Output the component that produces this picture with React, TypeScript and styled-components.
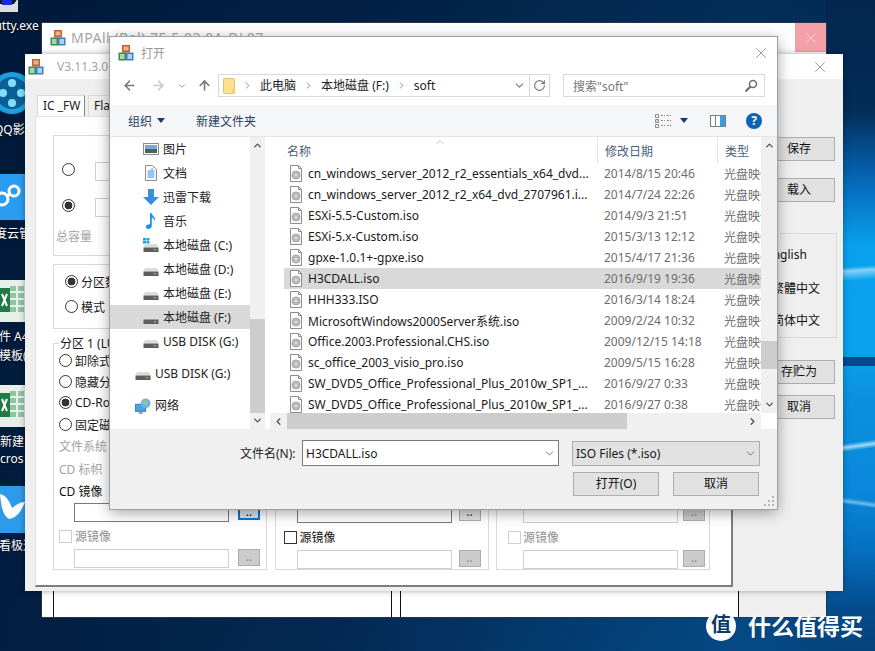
import React from "react";
import styled, { createGlobalStyle } from "styled-components";
import { ArrowLeft, ArrowRight, ArrowUp, ChevronDown, ChevronRight, ChevronUp, ChevronLeft, RotateCw, X } from "lucide-react";

const GlobalStyle = createGlobalStyle`
  html, body {
    margin: 0;
    padding: 0;
    overflow: hidden;
  }
  * {
    box-sizing: border-box;
  }
`;

const Desktop = styled.div`
  position: relative;
  width: 875px;
  height: 651px;
  overflow: hidden;
  font-family: "Noto Sans", "Noto Sans CJK SC", sans-serif;
  font-size: 12px;
  color: #1a1a1a;
  background:
    linear-gradient(180deg, rgba(1, 22, 52, 0.55) 0, rgba(1, 22, 52, 0) 100%),
    linear-gradient(90deg, #021d40 0%, #032a55 40%, #044a86 85%, #04437c 100%);
`;

const WallpaperStrip = styled.div`
  position: absolute;
  left: 826px;
  top: 0;
  width: 49px;
  height: 651px;
  background:
    linear-gradient(176deg, transparent 268px, rgba(170, 225, 250, 0.75) 272px, transparent 282px),
    linear-gradient(0deg, transparent 285px, #04498c 285px, #04498c 294px, transparent 294px),
    linear-gradient(172deg, transparent 442px, rgba(200, 235, 250, 0.8) 446px, transparent 450px),
    linear-gradient(8deg, transparent 148px, rgba(170, 225, 250, 0.6) 151px, transparent 155px),
    linear-gradient(180deg, #02264e 0, #032c58 110px, #0668b8 180px, #09a0ee 245px, #0aa2ec 350px, #0a90df 400px, #0a88db 490px, #0670c0 550px, #044b8c 610px, #04437c 651px);
`;

const DesktopLabel = styled.div<{ $x: number; $y: number }>`
  position: absolute;
  left: ${(p) => p.$x}px;
  top: ${(p) => p.$y}px;
  color: #fff;
  line-height: 16px;
  white-space: nowrap;
  text-shadow: 0 1px 2px rgba(0, 0, 0, 0.8);
`;

const DesktopIcon = styled.svg<{ $y: number }>`
  position: absolute;
  left: 0;
  top: ${(p) => p.$y}px;
  width: 26px;
  height: 48px;
`;

/* windows on the desktop */
const BackWindow = styled.div`
  position: absolute;
  left: 42px;
  top: 23px;
  width: 784px;
  height: 594px;
  background: #fff;
  display: flex;
  flex-direction: column;
  box-shadow: 0 0 0 1px #27344a;
`;

const BackTitle = styled.div`
  height: 31px;
  flex: none;
  display: flex;
  align-items: flex-start;
  gap: 5px;
  padding: 6px 0 0 8px;
  color: #a6a6a6;
  font-size: 14px;
`;

const BackTitleText = styled.span`
  line-height: 18px;
  letter-spacing: 0.5px;
`;

const BackClose = styled.div`
  margin: -6px 0 0 auto;
  width: 31px;
  height: 29px;
  background: #f4a0a8;
  color: #fde3e5;
  display: flex;
  align-items: center;
  justify-content: center;
`;

const BackBody = styled.div`
  flex: 1;
  display: flex;
  padding-left: 11px;
`;

const BackPanel = styled.div`
  width: 339px;
  border-left: 1px solid #111;
  border-right: 1px solid #111;
  margin-right: 8px;
  &:nth-child(2) {
    margin-right: 0;
  }
`;

const BackFill = styled.div`
  flex: 1;
  background: #efefef;
`;

const MidWindow = styled.div`
  position: absolute;
  left: 25px;
  top: 54px;
  width: 818px;
  height: 537px;
  background: #efefef;
  display: flex;
  flex-direction: column;
  box-shadow: 0 0 6px rgba(0, 0, 0, 0.35);
`;

const MidTitle = styled.div`
  height: 25px;
  flex: none;
  background: #fff;
  display: flex;
  align-items: center;
  gap: 13px;
  padding-left: 3px;
  color: #a6a6a6;
  font-size: 12px;
`;

const MidClose = styled.div`
  margin-left: auto;
  margin-right: 14px;
  color: #7a7a7a;
  display: flex;
`;

const MidBody = styled.div`
  flex: 1;
  display: flex;
`;

const TabColumn = styled.div`
  width: 708px;
  padding: 16px 0 0 10px;
`;

const TabRow = styled.div`
  display: flex;
  height: 21px;
  padding-left: 2px;
  gap: 3px;
`;

const Tab = styled.div<{ $active?: boolean }>`
  width: ${(p) => (p.$active ? 48 : 60)}px;
  background: ${(p) => (p.$active ? "#fff" : "#f0f0f0")};
  border: 1px solid #d9d9d9;
  border-bottom: none;
  border-right-color: ${(p) => (p.$active ? "#8a8a8a" : "#d9d9d9")};
  line-height: 20px;
  padding-left: 5px;
  white-space: nowrap;
  overflow: hidden;
`;

const TabPage = styled.div`
  width: 698px;
  height: 471px;
  background: #fff;
  border-top: 1px solid #e3e3e3;
  border-left: 1px solid #e3e3e3;
  border-right: 2px solid #7d7d7d;
  border-bottom: 2px solid #7d7d7d;
  padding: 18px 0 0 17px;
`;

const Box = styled.div<{ $h: number }>`
  width: 664px;
  height: ${(p) => p.$h}px;
  border: 1px solid #d9d9d9;
  margin-bottom: 8px;
`;

const DriveBox = styled(Box)`
  padding: 27px 0 0 8px;
  color: #a3a3a3;
`;

const SizeRow = styled.div`
  display: flex;
  align-items: flex-start;
  gap: 20px;
  height: 36px;
`;

const SizeField = styled.div`
  width: 80px;
  height: 19px;
  margin-top: -1px;
  border: 1px solid #cfcfcf;
`;

const CapacityLabel = styled.div`
  margin: -8px 0 0 -6px;
`;

const PartBox = styled(Box)`
  padding: 4px 0 0 11px;
`;

const RadioRow = styled.div<{ $h: number; $muted?: boolean }>`
  display: flex;
  align-items: center;
  gap: 3px;
  height: ${(p) => p.$h}px;
  color: ${(p) => (p.$muted ? "#a3a3a3" : "#1a1a1a")};
`;

const Radio = styled.span<{ $checked?: boolean }>`
  width: 13px;
  height: 13px;
  flex: none;
  border-radius: 50%;
  border: 1px solid #333;
  background: ${(p) => (p.$checked ? "radial-gradient(circle, #333 0, #333 3.6px, #fff 4.2px)" : "#fff")};
`;

const LunRow = styled.div`
  display: flex;
  gap: 7.5px;
  margin-top: 4px;
`;

const LunGroup = styled.fieldset`
  width: 214px;
  height: 233px;
  margin: 0;
  padding: 0 0 0 5px;
  border: 1px solid #d9d9d9;
  position: relative;
`;

const LunLegend = styled.legend`
  margin-left: 0;
  padding: 0 1px;
  line-height: 13px;
`;

const LunSpacer = styled.div`
  height: 166px;
`;

const FieldLabel = styled.div<{ $muted?: boolean; $h: number; $lh: number }>`
  height: ${(p) => p.$h}px;
  line-height: ${(p) => p.$lh}px;
  color: ${(p) => (p.$muted ? "#a3a3a3" : "#111")};
`;

const FieldRow = styled.div<{ $inset: number; $gap: number }>`
  display: flex;
  gap: ${(p) => p.$gap}px;
  padding-left: ${(p) => p.$inset}px;
`;

const PathInput = styled.div<{ $dim?: boolean }>`
  width: 155px;
  height: 19px;
  border: 1px solid ${(p) => (p.$dim ? "#cfcfcf" : "#7a7a7a")};
  background: #fff;
`;

const BrowseButton = styled.div<{ $state: "focus" | "normal" | "dim" }>`
  width: 22px;
  height: 17px;
  text-align: center;
  line-height: 14px;
  font-size: 12px;
  background: ${(p) => (p.$state === "dim" ? "#cccccc" : "#e1e1e1")};
  color: ${(p) => (p.$state === "dim" ? "#8a8a8a" : "#222")};
  border: ${(p) => (p.$state === "focus" ? "2px solid #0078d7" : "1px solid #adadad")};
`;

const CheckRow = styled.div<{ $muted?: boolean; $inset: number; $gap: number }>`
  display: flex;
  align-items: center;
  gap: ${(p) => p.$gap}px;
  height: 18px;
  margin: 5px 0 4px 0;
  padding-left: ${(p) => p.$inset}px;
  color: ${(p) => (p.$muted ? "#8f8f8f" : "#111")};
`;

const CheckBox = styled.span<{ $muted?: boolean }>`
  width: 13px;
  height: 13px;
  border: 1px solid ${(p) => (p.$muted ? "#cfcfcf" : "#333")};
  background: #fff;
  flex: none;
`;

const SideColumn = styled.div`
  flex: 1;
  padding: 58px 0 0 30px;
  display: flex;
  flex-direction: column;
`;

const SideButton = styled.div<{ $gap: number }>`
  width: 72px;
  height: 24px;
  flex: none;
  margin-bottom: ${(p) => p.$gap}px;
  background: #e1e1e1;
  border: 1px solid #adadad;
  text-align: center;
  line-height: 22px;
  color: #111;
`;

const LangBox = styled.div`
  width: 74px;
  height: 105px;
  flex: none;
  margin-top: -1px;
  margin-bottom: 22px;
  border: 1px solid #d9d9d9;
  display: flex;
  flex-direction: column;
  padding: 12px 0 0 8px;
`;

const LangItem = styled.div<{ $h: number; $shift?: number }>`
  height: ${(p) => p.$h}px;
  margin-left: ${(p) => p.$shift ?? 0}px;
  white-space: nowrap;
  line-height: 18px;
  color: #111;
  font-size: 12px;
`;

/* the open-file dialog */
const Dialog = styled.div`
  position: absolute;
  left: 110px;
  top: 37px;
  width: 667px;
  height: 472px;
  background: #fff;
  display: flex;
  flex-direction: column;
  box-shadow: 0 0 0 1px #a0a0a0, 0 3px 14px rgba(0, 0, 0, 0.4);
`;

const DlgTitle = styled.div`
  height: 31px;
  flex: none;
  display: flex;
  align-items: center;
  gap: 7px;
  padding-left: 8px;
  color: #999;
`;

const DlgClose = styled.div`
  margin-left: auto;
  margin-right: 7px;
  color: #7a7a7a;
  display: flex;
`;

const NavBar = styled.div`
  height: 37px;
  flex: none;
  display: flex;
  align-items: flex-start;
  padding-top: 6px;
`;

const NavButtons = styled.div`
  width: 108px;
  height: 23px;
  flex: none;
  display: flex;
  align-items: center;
  padding-left: 4px;
`;

const NavIcon = styled.span<{ $w: number; $color: string }>`
  width: ${(p) => p.$w}px;
  flex: none;
  display: flex;
  justify-content: center;
  color: ${(p) => p.$color};
`;

const AddressBox = styled.div`
  width: 332px;
  height: 23px;
  flex: none;
  border: 1px solid #d9d9d9;
  display: flex;
  align-items: center;
  padding-left: 4px;
`;

const Crumb = styled.span`
  white-space: nowrap;
  color: #222;
  line-height: 20px;
`;

const CrumbSep = styled.span<{ $w: number }>`
  width: ${(p) => p.$w}px;
  display: flex;
  justify-content: center;
  color: #8a8a8a;
  flex: none;
`;

const AddressEnd = styled.div`
  margin-left: auto;
  display: flex;
  align-items: center;
  height: 100%;
  color: #777;
`;

const AddressDrop = styled.span`
  width: 20px;
  display: flex;
  justify-content: center;
`;

const AddressRefresh = styled.span`
  width: 20px;
  height: 100%;
  border-left: 1px solid #d9d9d9;
  display: flex;
  align-items: center;
  justify-content: center;
`;

const SearchBox = styled.div`
  width: 202px;
  height: 23px;
  margin-left: 13px;
  flex: none;
  border: 1px solid #d9d9d9;
  display: flex;
  align-items: center;
  justify-content: space-between;
  padding: 0 6px 0 9px;
  color: #777;
`;

const ToolBar = styled.div`
  height: 32px;
  flex: none;
  background: #f5f6f7;
  border-bottom: 1px solid #e3e5e8;
  display: flex;
  align-items: center;
  padding-left: 18px;
  color: #2a3f5f;
`;

const ToolText = styled.span<{ $w: number; $left?: number }>`
  width: ${(p) => p.$w}px;
  margin-left: ${(p) => p.$left ?? 0}px;
  flex: none;
  white-space: nowrap;
`;

const ToolCaret = styled.span<{ $left?: number; $right?: number }>`
  width: 0;
  height: 0;
  margin-left: ${(p) => p.$left ?? 5}px;
  margin-right: ${(p) => p.$right ?? 0}px;
  border-left: 4px solid transparent;
  border-right: 4px solid transparent;
  border-top: 5px solid #1d3a63;
`;

const ToolRight = styled.div`
  margin-left: auto;
  display: flex;
  align-items: center;
  padding-right: 15px;
`;

const HelpBadge = styled.span`
  width: 16px;
  height: 16px;
  margin-left: 20px;
  border-radius: 50%;
  background: #0d62b8;
  color: #fff;
  font-weight: 700;
  font-size: 12px;
  line-height: 16px;
  text-align: center;
`;

const MainArea = styled.div`
  height: 292px;
  flex: none;
  display: flex;
`;

const Sidebar = styled.div`
  width: 140px;
  flex: none;
  overflow: hidden;
`;

const NavItem = styled.div<{ $selected?: boolean; $top?: boolean; $gap?: number }>`
  height: 24px;
  display: flex;
  align-items: center;
  gap: 4px;
  padding-left: ${(p) => (p.$top ? 25 : 33)}px;
  margin-top: ${(p) => p.$gap ?? 0}px;
  background: ${(p) => (p.$selected ? "#d9d9d9" : "transparent")};
  white-space: nowrap;
  color: #222;
`;

const NavIconBox = styled.span`
  width: 16px;
  height: 16px;
  flex: none;
  display: flex;
`;

const VScroll = styled.div<{ $w: number }>`
  width: ${(p) => p.$w}px;
  flex: none;
  background: #f0f0f0;
  position: relative;
  color: #555;
  display: flex;
  flex-direction: column;
  align-items: center;
  justify-content: space-between;
  padding: 3px 0;
`;

const ScrollThumb = styled.div<{ $top: number; $h: number }>`
  position: absolute;
  left: 0;
  right: 0;
  top: ${(p) => p.$top}px;
  height: ${(p) => p.$h}px;
  background: #cdcdcd;
`;

const ListPane = styled.div`
  flex: 1;
  margin-left: 5px;
  display: grid;
  grid-template-columns: 491px 16px;
  grid-template-rows: 276px 16px;
`;

const ListArea = styled.div`
  padding-left: 14px;
  position: relative;
  overflow: hidden;
`;

const SortCaret = styled.span`
  position: absolute;
  left: 164px;
  top: -1px;
  color: #8a8a8a;
  display: flex;
`;

const HeaderRow = styled.div`
  display: grid;
  grid-template-columns: 313px 120px 44px;
  height: 26px;
  color: #4c607a;
`;

const HeaderCell = styled.div`
  padding: 5px 0 0 3px;
  &:not(:first-child) {
    border-left: 1px solid #e5e5e5;
    padding-left: 7px;
  }
`;

const FileRow = styled.div<{ $selected?: boolean }>`
  display: grid;
  grid-template-columns: 313px 120px 44px;
  align-items: center;
  height: 21px;
  background: ${(p) => (p.$selected ? "#d9d9d9" : "transparent")};
`;

const NameCell = styled.div`
  display: flex;
  align-items: center;
  gap: 6px;
  padding-left: 6px;
  white-space: nowrap;
  overflow: hidden;
  color: #1a1a1a;
`;

const DateCell = styled.div`
  padding-left: 7px;
  color: #6d6d6d;
  white-space: nowrap;
`;

const TypeCell = styled.div`
  padding-left: 7px;
  color: #6d6d6d;
  white-space: nowrap;
  overflow: hidden;
`;

const HScroll = styled.div`
  background: #f0f0f0;
  display: flex;
  align-items: center;
  color: #555;
`;

const HThumb = styled.div`
  width: 340px;
  height: 100%;
  background: #cdcdcd;
`;

const HArrow = styled.span<{ $w: number; $end?: boolean }>`
  width: ${(p) => p.$w}px;
  flex: none;
  display: flex;
  justify-content: ${(p) => (p.$end ? "flex-end" : "center")};
  padding-right: ${(p) => (p.$end ? 3 : 0)}px;
`;

const ScrollCorner = styled.div`
  background: #fff;
`;

const BottomPanel = styled.div`
  flex: 1;
  background: #f0f0f0;
  padding: 11px 17px 0 130px;
  position: relative;
`;

const FileNameRow = styled.div`
  display: flex;
  align-items: center;
  height: 26px;
`;

const FileNameLabel = styled.div`
  width: 62px;
  flex: none;
  white-space: nowrap;
  color: #222;
`;

const FileNameInput = styled.div`
  width: 257px;
  height: 26px;
  flex: none;
  background: #fff;
  border: 1px solid #7a7a7a;
  display: flex;
  align-items: center;
  justify-content: space-between;
  padding: 0 2px 0 3px;
  color: #1a1a1a;
`;

const FilterCombo = styled.div`
  width: 188px;
  height: 25px;
  margin-left: 13px;
  flex: none;
  background: #e1e1e1;
  border: 1px solid #adadad;
  display: flex;
  align-items: center;
  justify-content: space-between;
  padding: 0 2px 0 3px;
  color: #1a1a1a;
`;

const ActionRow = styled.div`
  display: flex;
  justify-content: flex-end;
  gap: 14px;
  margin-top: 6px;
  padding-right: 1px;
`;

const ActionButton = styled.div`
  width: 86px;
  height: 24px;
  background: #e1e1e1;
  border: 1px solid #adadad;
  text-align: center;
  line-height: 22px;
  color: #111;
`;

const Grip = styled.svg`
  position: absolute;
  right: 2px;
  bottom: 2px;
`;

const Watermark = styled.div`
  position: absolute;
  left: 706px;
  top: 611px;
  display: flex;
  align-items: center;
  gap: 12px;
`;

const WatermarkBadge = styled.span`
  width: 30px;
  height: 30px;
  border-radius: 50%;
  background: #fff;
  color: #0a3a6b;
  font-size: 20px;
  font-weight: 700;
  line-height: 28px;
  text-align: center;
`;

const WatermarkText = styled.span`
  color: #fff;
  font-size: 23px;
  font-weight: 700;
  line-height: 30px;
  white-space: nowrap;
`;

const AppLogo = () => (
  <svg width="16" height="17" viewBox="0 0 16 17" style={{ flex: "none" }}>
    <rect x="4" y="1" width="8" height="7.5" fill="#c8622a" />
    <rect x="5.5" y="2.5" width="5" height="4" fill="#e9b48c" />
    <rect x="0.5" y="8.5" width="7.5" height="8" fill="#3d8a55" />
    <rect x="2" y="10" width="4.5" height="5" fill="#a9d3b4" />
    <rect x="8" y="8.5" width="7.5" height="8" fill="#3f7dc4" />
    <rect x="9.5" y="10" width="4.5" height="5" fill="#b1cfee" />
  </svg>
);

const DiscFile = () => (
  <svg width="12" height="17" viewBox="0 0 12 17" style={{ flex: "none" }}>
    <path d="M.5.5h8l3 3v13H.5z" fill="#fff" stroke="#8c8c8c" />
    <path d="M8.5.5v3h3" fill="none" stroke="#8c8c8c" />
    <circle cx="6" cy="10" r="4" fill="#bcbcbc" stroke="#a5a5a5" />
    <circle cx="6" cy="10" r="1" fill="#eee" />
  </svg>
);

const DriveIcon = ({ win }: { win?: boolean }) => (
  <svg width="16" height="16" viewBox="0 0 16 16">
    {win && <path d="M0 1h3v2.5H0zM3.5 1h3v2.5h-3zM0 4h3v2.5H0zM3.5 4h3v2.5h-3z" fill="#19a3e8" />}
    <path d="M2 7h12l1.500 3.500h-15z" fill="#dcdcdc" />
    <rect x="0.5" y="10.500" width="15" height="4.500" fill="#5e5e5e" />
    <rect x="11" y="12" width="2" height="1.500" fill="#4ed04e" />
  </svg>
);

const PictureIcon = () => (
  <svg width="16" height="16" viewBox="0 0 16 16">
    <rect x="0.500" y="2.500" width="15" height="11" fill="#fff" stroke="#8c8c8c" />
    <rect x="2" y="4" width="12" height="4" fill="#7ea7d8" />
    <rect x="2" y="8" width="12" height="4" fill="#3e6b58" />
  </svg>
);

const DocIcon = () => (
  <svg width="16" height="16" viewBox="0 0 16 16">
    <path d="M2.500.5h7l4 4v11h-11z" fill="#fff" stroke="#8c8c8c" />
    <path d="M4.500 6h7M4.500 8h7M4.500 10h7M4.500 12h7M8 4h2" stroke="#2f8fe0" />
  </svg>
);

const DownloadIcon = () => (
  <svg width="16" height="16" viewBox="0 0 16 16">
    <path d="M5 0h6v8h5l-8 8-8-8h5z" fill="#3a8fdc" />
  </svg>
);

const MusicIcon = () => (
  <svg width="16" height="16" viewBox="0 0 16 16">
    <path d="M7 0h1.500c.5 3 4.500 4 3.500 8-.5-2-2-3-3.200-3.300V13c0 2-2 3-3.800 3S3 15 3 13.500 5 11 7 11.300z" fill="#1e90e8" />
  </svg>
);

const NetworkIcon = () => (
  <svg width="18" height="18" viewBox="0 0 18 18">
    <rect x="0" y="7" width="12" height="8" fill="#4aa3dc" stroke="#2b78b0" />
    <path d="M4 17h5M6.500 15v2" stroke="#7a8ea0" strokeWidth="1.500" />
    <circle cx="12" cy="6" r="5.500" fill="#6fb0e8" />
    <path d="M9 4c2-2 4-2 5 0s0 4-2 4-4-2-3-4z" fill="#8fc98f" />
  </svg>
);

const SearchGlyph = () => (
  <svg width="14" height="14" viewBox="0 0 14 14">
    <circle cx="9" cy="5" r="3.500" fill="none" stroke="#707070" strokeWidth="1.600" />
    <path d="M6.500 7.500L1.500 12.500" stroke="#707070" strokeWidth="2.200" />
  </svg>
);

const ViewGlyph = () => (
  <svg width="16" height="14" viewBox="0 0 16 14">
    <path d="M.5.500h3v3h-3zM.5 5.500h3v3h-3zM.5 10.500h3v3h-3z" fill="#fff" stroke="#8a8a8a" />
    <path d="M1.500 6.500h1v1h-1z" fill="#d24a4a" />
    <path d="M6 1.500h4M12 1.500h4M6 6.500h4M12 6.500h4M6 11.500h4M12 11.500h4" stroke="#8a8a8a" strokeDasharray="2 1" />
  </svg>
);

const PaneGlyph = () => (
  <svg width="16" height="12" viewBox="0 0 16 12">
    <rect x="0.500" y="0.500" width="15" height="11" fill="#fff" stroke="#7d7d7d" />
    <rect x="10" y="1" width="5" height="10" fill="#3d9be0" />
    <path d="M5.500 1v10" stroke="#7d7d7d" />
  </svg>
);

const ExcelShortcut = ({ y }: { y: number }) => (
  <DesktopIcon $y={y} viewBox="0 0 26 48">
    <rect x="0" y="0" width="26" height="42" fill="#e8efe9" />
    <path d="M10 6h6v5h-6zM18 6h6v5h-6zM10 13h6v5h-6zM18 13h6v5h-6zM10 20h6v5h-6zM18 20h6v5h-6zM10 27h6v5h-6zM18 27h6v5h-6z" fill="#8fc3a3" />
    <rect x="0" y="8" width="10" height="24" fill="#1f7a45" />
    <path d="M2 14l5 12M7 14l-5 12" stroke="#fff" strokeWidth="2" />
  </DesktopIcon>
);

const files = [
  { name: "cn_windows_server_2012_r2_essentials_x64_dvd...", date: "2014/8/15 20:46" },
  { name: "cn_windows_server_2012_r2_x64_dvd_2707961.i...", date: "2014/7/24 22:26" },
  { name: "ESXi-5.5-Custom.iso", date: "2014/9/3 21:51" },
  { name: "ESXi-5.x-Custom.iso", date: "2015/3/13 12:12" },
  { name: "gpxe-1.0.1+-gpxe.iso", date: "2015/4/17 21:36" },
  { name: "H3CDALL.iso", date: "2016/9/19 19:36", selected: true },
  { name: "HHH333.ISO", date: "2016/3/14 18:24" },
  { name: "MicrosoftWindows2000Server系统.iso", date: "2009/2/24 10:32" },
  { name: "Office.2003.Professional.CHS.iso", date: "2009/12/15 14:18" },
  { name: "sc_office_2003_visio_pro.iso", date: "2009/5/15 16:28" },
  { name: "SW_DVD5_Office_Professional_Plus_2010w_SP1_...", date: "2016/9/27 0:33" },
  { name: "SW_DVD5_Office_Professional_Plus_2010w_SP1_...", date: "2016/9/27 0:38" },
];

const libraries = [
  { label: "图片", icon: <PictureIcon /> },
  { label: "文档", icon: <DocIcon /> },
  { label: "迅雷下载", icon: <DownloadIcon /> },
  { label: "音乐", icon: <MusicIcon /> },
  { label: "本地磁盘 (C:)", icon: <DriveIcon win /> },
  { label: "本地磁盘 (D:)", icon: <DriveIcon /> },
  { label: "本地磁盘 (E:)", icon: <DriveIcon /> },
  { label: "本地磁盘 (F:)", icon: <DriveIcon />, selected: true },
  { label: "USB DISK (G:)", icon: <DriveIcon /> },
];

interface LunPanelProps {
  title?: string;
  enabled?: boolean;
  inputInset: number;
  inputGap: number;
  checkInset: number;
  checkGap: number;
  checkEnabled?: boolean;
  upperDim?: boolean;
}

const LunPanel: React.FC<LunPanelProps> = ({ title, enabled, inputInset, inputGap, checkInset, checkGap, checkEnabled, upperDim }) => (
  <LunGroup>
    {title && <LunLegend>{title}</LunLegend>}
    {enabled ? (
      <>
        <RadioRow $h={21}><Radio />卸除式磁盘</RadioRow>
        <RadioRow $h={21}><Radio />隐藏分区</RadioRow>
        <RadioRow $h={21}><Radio $checked />CD-Rom</RadioRow>
        <RadioRow $h={23}><Radio />固定磁盘</RadioRow>
        <FieldLabel $muted $h={23} $lh={21}>文件系统</FieldLabel>
        <FieldLabel $muted $h={23} $lh={21}>CD 标帜</FieldLabel>
        <FieldLabel $h={21} $lh={19}>CD 镜像</FieldLabel>
      </>
    ) : (
      <LunSpacer />
    )}
    <FieldRow $inset={inputInset} $gap={inputGap}>
      <PathInput $dim={upperDim} />
      <BrowseButton $state={enabled ? "focus" : upperDim ? "dim" : "normal"}>..</BrowseButton>
    </FieldRow>
    <CheckRow $muted={!checkEnabled} $inset={checkInset} $gap={checkGap}>
      <CheckBox $muted={!checkEnabled} />
      源镜像
    </CheckRow>
    <FieldRow $inset={inputInset} $gap={inputGap}>
      <PathInput $dim />
      <BrowseButton $state="dim">..</BrowseButton>
    </FieldRow>
  </LunGroup>
);

const App: React.FC = () => {
  return (
    <Desktop>
      <GlobalStyle />
      <WallpaperStrip />

      <DesktopIcon $y={-30} viewBox="0 0 26 48">
        <path d="M0 34h14l4-6v14H0z" fill="#ddd" />
        <rect x="2" y="26" width="10" height="9" fill="#1a2bd8" />
      </DesktopIcon>
      <DesktopLabel $x={-13} $y={18}>putty.exe</DesktopLabel>

      <DesktopIcon $y={68} viewBox="0 0 26 48">
        <circle cx="12" cy="25" r="21" fill="#19a0dc" />
        <circle cx="12" cy="25" r="16" fill="#0b5f96" />
        <circle cx="12" cy="15" r="4" fill="#7fe0f5" />
        <circle cx="3" cy="25" r="4" fill="#7fe0f5" />
        <circle cx="21" cy="25" r="4" fill="#7fe0f5" />
        <circle cx="12" cy="35" r="4" fill="#7fe0f5" />
      </DesktopIcon>
      <DesktopLabel $x={-6} $y={122}>QQ影音</DesktopLabel>

      <DesktopIcon $y={174} viewBox="0 0 26 48">
        <rect x="-6" y="0" width="32" height="46" rx="2" fill="#2b9df0" />
        <circle cx="2" cy="25" r="6" fill="none" stroke="#fff" strokeWidth="3" />
        <circle cx="14" cy="17" r="5" fill="none" stroke="#fff" strokeWidth="3" />
        <path d="M6 22l5-2" stroke="#fff" strokeWidth="3" />
      </DesktopIcon>
      <DesktopLabel $x={-17} $y={226}>百度云管家</DesktopLabel>

      <ExcelShortcut y={280} />
      <DesktopLabel $x={-1} $y={329}>件 A4纸</DesktopLabel>
      <DesktopLabel $x={-1} $y={348}>模板(</DesktopLabel>

      <ExcelShortcut y={385} />
      <DesktopLabel $x={0} $y={434}>新建</DesktopLabel>
      <DesktopLabel $x={0} $y={451}>cros</DesktopLabel>

      <DesktopIcon $y={486} viewBox="0 0 26 48">
        <rect x="-4" y="0" width="30" height="47" fill="#2e9be8" />
        <path d="M0 8c6 1 10 8 12 14 4-3 8-6 13-6-3 8-8 16-16 17C3 30 1 20 0 8z" fill="#fff" />
      </DesktopIcon>
      <DesktopLabel $x={-1} $y={538}>看极速</DesktopLabel>

      <BackWindow>
        <BackTitle>
          <AppLogo />
          <BackTitleText>MPAll (Bel) 75.5.03.0A-DL07</BackTitleText>
          <BackClose><X size={16} strokeWidth={1.2} /></BackClose>
        </BackTitle>
        <BackBody>
          <BackPanel />
          <BackPanel />
          <BackFill />
        </BackBody>
      </BackWindow>

      <MidWindow>
        <MidTitle>
          <AppLogo />
          V3.11.3.0
          <MidClose><X size={18} strokeWidth={1} /></MidClose>
        </MidTitle>
        <MidBody>
          <TabColumn>
            <TabRow>
              <Tab $active>IC _FW</Tab>
              <Tab>Flash</Tab>
            </TabRow>
            <TabPage>
              <DriveBox $h={121}>
                <SizeRow><Radio /><SizeField /></SizeRow>
                <SizeRow><Radio $checked /><SizeField /></SizeRow>
                <CapacityLabel>总容量</CapacityLabel>
              </DriveBox>
              <PartBox $h={65}>
                <RadioRow $h={25}><Radio $checked />分区数</RadioRow>
                <RadioRow $h={25}><Radio />模式</RadioRow>
              </PartBox>
              <LunRow>
                <LunPanel enabled title="分区 1 (LUN 0)" inputInset={15} inputGap={9} checkInset={0} checkGap={3} />
                <LunPanel inputInset={16} inputGap={7} checkInset={3} checkGap={3} checkEnabled />
                <LunPanel inputInset={21} inputGap={5} checkInset={6} checkGap={2} upperDim />
              </LunRow>
            </TabPage>
          </TabColumn>
          <SideColumn>
            <SideButton $gap={17}>保存</SideButton>
            <SideButton $gap={32}>载入</SideButton>
            <LangBox>
              <LangItem $h={34} $shift={-6}>English</LangItem>
              <LangItem $h={32}>繁體中文</LangItem>
              <LangItem $h={20}>简体中文</LangItem>
            </LangBox>
            <SideButton $gap={11}>存贮为</SideButton>
            <SideButton $gap={0}>取消</SideButton>
          </SideColumn>
        </MidBody>
      </MidWindow>

      <Dialog>
        <DlgTitle>
          <AppLogo />
          打开
          <DlgClose><X size={18} strokeWidth={1} /></DlgClose>
        </DlgTitle>
        <NavBar>
          <NavButtons>
            <NavIcon $w={30} $color="#787878"><ArrowLeft size={15} strokeWidth={2.4} /></NavIcon>
            <NavIcon $w={28} $color="#c8c8c8"><ArrowRight size={15} strokeWidth={2.4} /></NavIcon>
            <NavIcon $w={20} $color="#9a9a9a"><ChevronDown size={10} strokeWidth={2.4} /></NavIcon>
            <NavIcon $w={24} $color="#787878"><ArrowUp size={15} strokeWidth={2.6} /></NavIcon>
          </NavButtons>
          <AddressBox>
            <svg width="12" height="16" viewBox="0 0 12 16" style={{ flex: "none" }}>
              <rect x="0.500" y="0.500" width="11" height="15" rx="1" fill="#ffe28f" stroke="#e2c266" />
              <rect x="9" y="11" width="3" height="5" fill="#f4cf6d" />
            </svg>
            <CrumbSep $w={25}><ChevronRight size={11} strokeWidth={2} /></CrumbSep>
            <Crumb>此电脑</Crumb>
            <CrumbSep $w={25}><ChevronRight size={11} strokeWidth={2} /></CrumbSep>
            <Crumb>本地磁盘 (F:)</Crumb>
            <CrumbSep $w={25}><ChevronRight size={11} strokeWidth={2} /></CrumbSep>
            <Crumb>soft</Crumb>
            <AddressEnd>
              <AddressDrop><ChevronDown size={13} strokeWidth={2} /></AddressDrop>
              <AddressRefresh><RotateCw size={13} strokeWidth={2} /></AddressRefresh>
            </AddressEnd>
          </AddressBox>
          <SearchBox>
            搜索"soft"
            <SearchGlyph />
          </SearchBox>
        </NavBar>
        <ToolBar>
          <ToolText $w={24}>组织</ToolText>
          <ToolCaret />
          <ToolText $w={60} $left={31}>新建文件夹</ToolText>
          <ToolRight>
            <ViewGlyph />
            <ToolCaret $left={9} $right={22} />
            <PaneGlyph />
            <HelpBadge>?</HelpBadge>
          </ToolRight>
        </ToolBar>
        <MainArea>
          <Sidebar>
            {libraries.map((item) => (
              <NavItem key={item.label} $selected={item.selected}>
                <NavIconBox>{item.icon}</NavIconBox>
                {item.label}
              </NavItem>
            ))}
            <NavItem $top $gap={8}>
              <NavIconBox><DriveIcon /></NavIconBox>
              USB DISK (G:)
            </NavItem>
            <NavItem $top $gap={8}>
              <NavIconBox><NetworkIcon /></NavIconBox>
              网络
            </NavItem>
          </Sidebar>
          <VScroll $w={15}>
            <ChevronUp size={11} strokeWidth={3} />
            <ScrollThumb $top={182} $h={94} />
            <ChevronDown size={11} strokeWidth={3} />
          </VScroll>
          <ListPane>
            <ListArea>
              <SortCaret><ChevronUp size={12} strokeWidth={1.2} /></SortCaret>
              <HeaderRow>
                <HeaderCell>名称</HeaderCell>
                <HeaderCell>修改日期</HeaderCell>
                <HeaderCell>类型</HeaderCell>
              </HeaderRow>
              {files.map((file) => (
                <FileRow key={file.date} $selected={file.selected}>
                  <NameCell>
                    <DiscFile />
                    {file.name}
                  </NameCell>
                  <DateCell>{file.date}</DateCell>
                  <TypeCell>光盘映像文件</TypeCell>
                </FileRow>
              ))}
            </ListArea>
            <VScroll $w={16}>
              <ChevronUp size={11} strokeWidth={3} />
              <ScrollThumb $top={204} $h={28} />
              <ChevronDown size={11} strokeWidth={3} />
            </VScroll>
            <HScroll>
              <HArrow $w={17}><ChevronLeft size={11} strokeWidth={3} /></HArrow>
              <HThumb />
              <HArrow $w={134} $end><ChevronRight size={11} strokeWidth={3} /></HArrow>
            </HScroll>
            <ScrollCorner />
          </ListPane>
        </MainArea>
        <BottomPanel>
          <FileNameRow>
            <FileNameLabel>文件名(N):</FileNameLabel>
            <FileNameInput>
              H3CDALL.iso
              <ChevronDown size={13} strokeWidth={1.4} color="#555" />
            </FileNameInput>
            <FilterCombo>
              ISO Files (*.iso)
              <ChevronDown size={13} strokeWidth={1.4} color="#555" />
            </FilterCombo>
          </FileNameRow>
          <ActionRow>
            <ActionButton>打开(O)</ActionButton>
            <ActionButton>取消</ActionButton>
          </ActionRow>
          <Grip width="11" height="11" viewBox="0 0 11 11">
            <path d="M8 0h2v2H8zM4 4h2v2H4zM8 4h2v2H8zM0 8h2v2H0zM4 8h2v2H4zM8 8h2v2H8z" fill="#b5b5b5" />
          </Grip>
        </BottomPanel>
      </Dialog>

      <Watermark>
        <WatermarkBadge>值</WatermarkBadge>
        <WatermarkText>什么值得买</WatermarkText>
      </Watermark>
    </Desktop>
  );
};

export default App;
